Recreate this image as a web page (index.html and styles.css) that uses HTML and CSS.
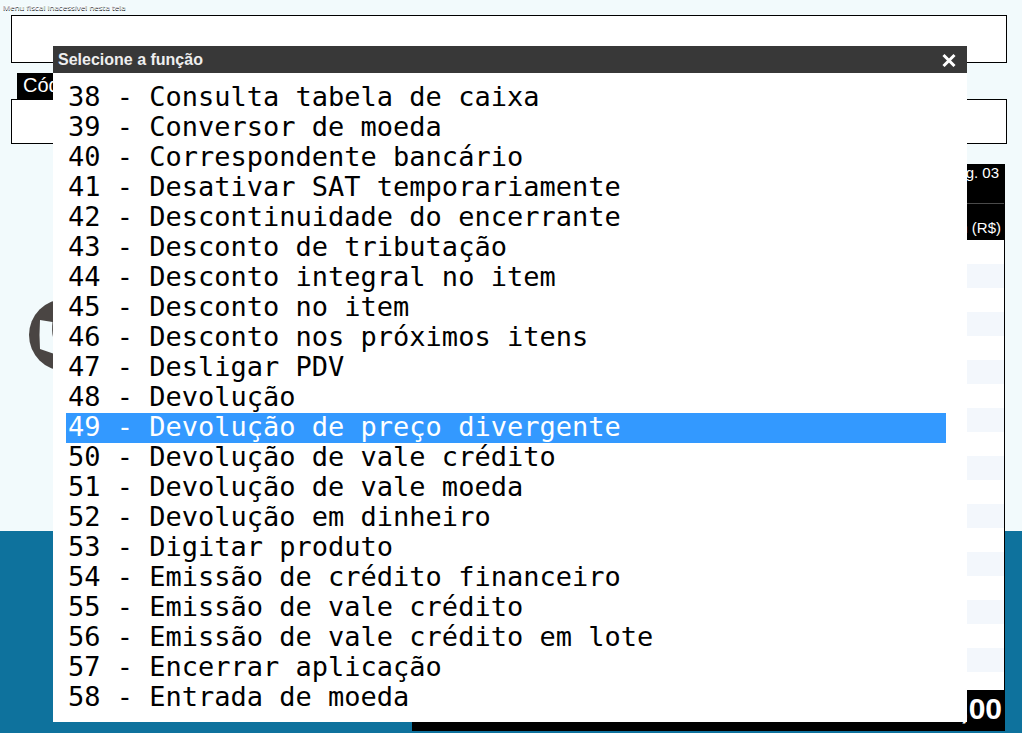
FILE: index.html
```html
<!DOCTYPE html>
<html lang="pt-BR">
<head>
    <meta charset="UTF-8">
    <meta name="viewport" content="width=device-width, initial-scale=1.0">
    <title>PDV - Selecione a função</title>
    <link rel="stylesheet" href="styles.css">
</head>
<body>
    <div class="pdv">
        <p class="menu-fiscal">Menu fiscal inacessível nesta tela</p>

        <input class="campo campo-descricao" type="text" aria-label="Descrição">

        <label class="rotulo" for="codigo">Cód.</label>
        <input class="campo campo-codigo" id="codigo" type="text">

        <main class="conteudo">
            <div class="marca">
                <svg class="logo" viewBox="0 0 72 72" aria-hidden="true">
                    <circle cx="36" cy="36" r="36" fill="#4a4543"/>
                    <path d="M11 21 L23.5 23 Q22.5 32 24 38 L40 44 L40 60 L11 50 Q10 36 11 21Z" fill="#f2fafc"/>
                </svg>
            </div>

            <section class="cupom">
                <div class="cupom-pagina">Pág. 03</div>
                <div class="cupom-colunas">Item (R$)</div>
                <div class="cupom-itens"></div>
                <div class="cupom-total">R$ 0,00</div>
            </section>
        </main>
    </div>

    <div class="overlay">
        <div class="modal" role="dialog" aria-labelledby="modal-titulo">
            <header class="modal-topo">
                <h1 id="modal-titulo">Selecione a função</h1>
                <button class="fechar" type="button" aria-label="Fechar">
                    <svg viewBox="0 0 14 14" aria-hidden="true">
                        <path d="M1.5 2 L12.5 13 M12.5 2 L1.5 13" stroke="#fff" stroke-width="3" fill="none"/>
                    </svg>
                </button>
            </header>
            <ul class="funcoes">
                <li><button type="button">38 - Consulta tabela de caixa</button></li>
                <li><button type="button">39 - Conversor de moeda</button></li>
                <li><button type="button">40 - Correspondente bancário</button></li>
                <li><button type="button">41 - Desativar SAT temporariamente</button></li>
                <li><button type="button">42 - Descontinuidade do encerrante</button></li>
                <li><button type="button">43 - Desconto de tributação</button></li>
                <li><button type="button">44 - Desconto integral no item</button></li>
                <li><button type="button">45 - Desconto no item</button></li>
                <li><button type="button">46 - Desconto nos próximos itens</button></li>
                <li><button type="button">47 - Desligar PDV</button></li>
                <li><button type="button">48 - Devolução</button></li>
                <li><button class="ativo" type="button" aria-current="true">49 - Devolução de preço divergente</button></li>
                <li><button type="button">50 - Devolução de vale crédito</button></li>
                <li><button type="button">51 - Devolução de vale moeda</button></li>
                <li><button type="button">52 - Devolução em dinheiro</button></li>
                <li><button type="button">53 - Digitar produto</button></li>
                <li><button type="button">54 - Emissão de crédito financeiro</button></li>
                <li><button type="button">55 - Emissão de vale crédito</button></li>
                <li><button type="button">56 - Emissão de vale crédito em lote</button></li>
                <li><button type="button">57 - Encerrar aplicação</button></li>
                <li><button type="button">58 - Entrada de moeda</button></li>
            </ul>
        </div>
    </div>
</body>
</html>
```
FILE: styles.css
```css
:root {
    --fundo: #f2fafc;
    --azul: #0e729d;
    --destaque: #3399ff;
    --listra: #f3f7fc;
}

* {
    box-sizing: border-box;
}

body {
    margin: 0;
    font-family: "Liberation Sans", Arial, sans-serif;
    color: #000;
}

/* Tela de venda */
.pdv {
    display: flex;
    flex-direction: column;
    min-height: 100vh;
    padding: 0 15px 2px 11px;
    background: linear-gradient(var(--azul), var(--azul)) bottom / 100% 202px no-repeat var(--fundo);
}

.menu-fiscal {
    margin: 0 0 0 -8px;
    height: 15px;
    font-family: "Open Sans", sans-serif;
    font-size: 8px;
    line-height: 14px;
    color: #fff;
    text-shadow: 0 1px 0 #000;
}

.campo {
    width: 100%;
    border: 1px solid #000;
    border-radius: 0;
    padding: 0 8px;
    background: #fff;
    font-size: 20px;
}

.campo-descricao {
    height: 48px;
}

.campo-codigo {
    height: 45px;
}

.rotulo {
    align-self: flex-start;
    height: 26px;
    margin: 10px 0 0 6px;
    padding: 0 6px;
    background: #000;
    color: #fff;
    font-size: 20px;
    line-height: 24px;
}

.conteudo {
    flex: 1;
    display: grid;
    grid-template-columns: 401fr 593fr;
    margin: 20px 2px 0 0;
}

.marca {
    padding: 135px 0 0 18px;
}

.logo {
    display: block;
    width: 72px;
    height: 72px;
}

.cupom {
    display: flex;
    flex-direction: column;
    border: 1px solid #000;
    border-width: 0 1px;
    background: #fff;
    text-align: right;
}

.cupom-pagina,
.cupom-colunas {
    background: #000;
    color: #fff;
    font-size: 15px;
}

.cupom-pagina {
    height: 40px;
    padding: 0 5px;
    border-bottom: 1px solid #4a4a4a;
    line-height: 18px;
}

.cupom-colunas {
    height: 36px;
    padding: 12px 3px 0;
    line-height: 24px;
}

.cupom-itens {
    flex: 1;
    background: repeating-linear-gradient(#fff 0 24px, var(--listra) 24px 48px);
}

.cupom-total {
    height: 41px;
    padding: 0 2px;
    background: #000;
    color: #fff;
    font-size: 30px;
    font-weight: bold;
    line-height: 38px;
}

/* Janela de funções */
.overlay {
    position: fixed;
    inset: 0;
    padding: 46px 55px 0 53px;
}

.modal {
    background: #fff;
}

.modal-topo {
    display: flex;
    align-items: center;
    justify-content: space-between;
    height: 27px;
    padding: 0 11px 0 5px;
    background: #383838;
}

.modal-topo h1 {
    margin: 0;
    color: #eee;
    font-size: 16px;
    line-height: 27px;
}

.fechar {
    width: 14px;
    height: 14px;
    padding: 0;
    border: 0;
    background: none;
    cursor: pointer;
}

.fechar svg {
    display: block;
}

.funcoes {
    margin: 0;
    padding: 10px 21px 9px 13px;
    list-style: none;
}

.funcoes button {
    display: block;
    width: 100%;
    height: 30px;
    padding: 0 2px 2px;
    border: 0;
    background: none;
    color: #000;
    font-family: "DejaVu Sans Mono", "Lucida Console", monospace;
    font-size: 27px;
    line-height: 28px;
    text-align: left;
    white-space: nowrap;
    cursor: pointer;
}

.funcoes .ativo {
    background: var(--destaque);
    color: #fff;
}
```
